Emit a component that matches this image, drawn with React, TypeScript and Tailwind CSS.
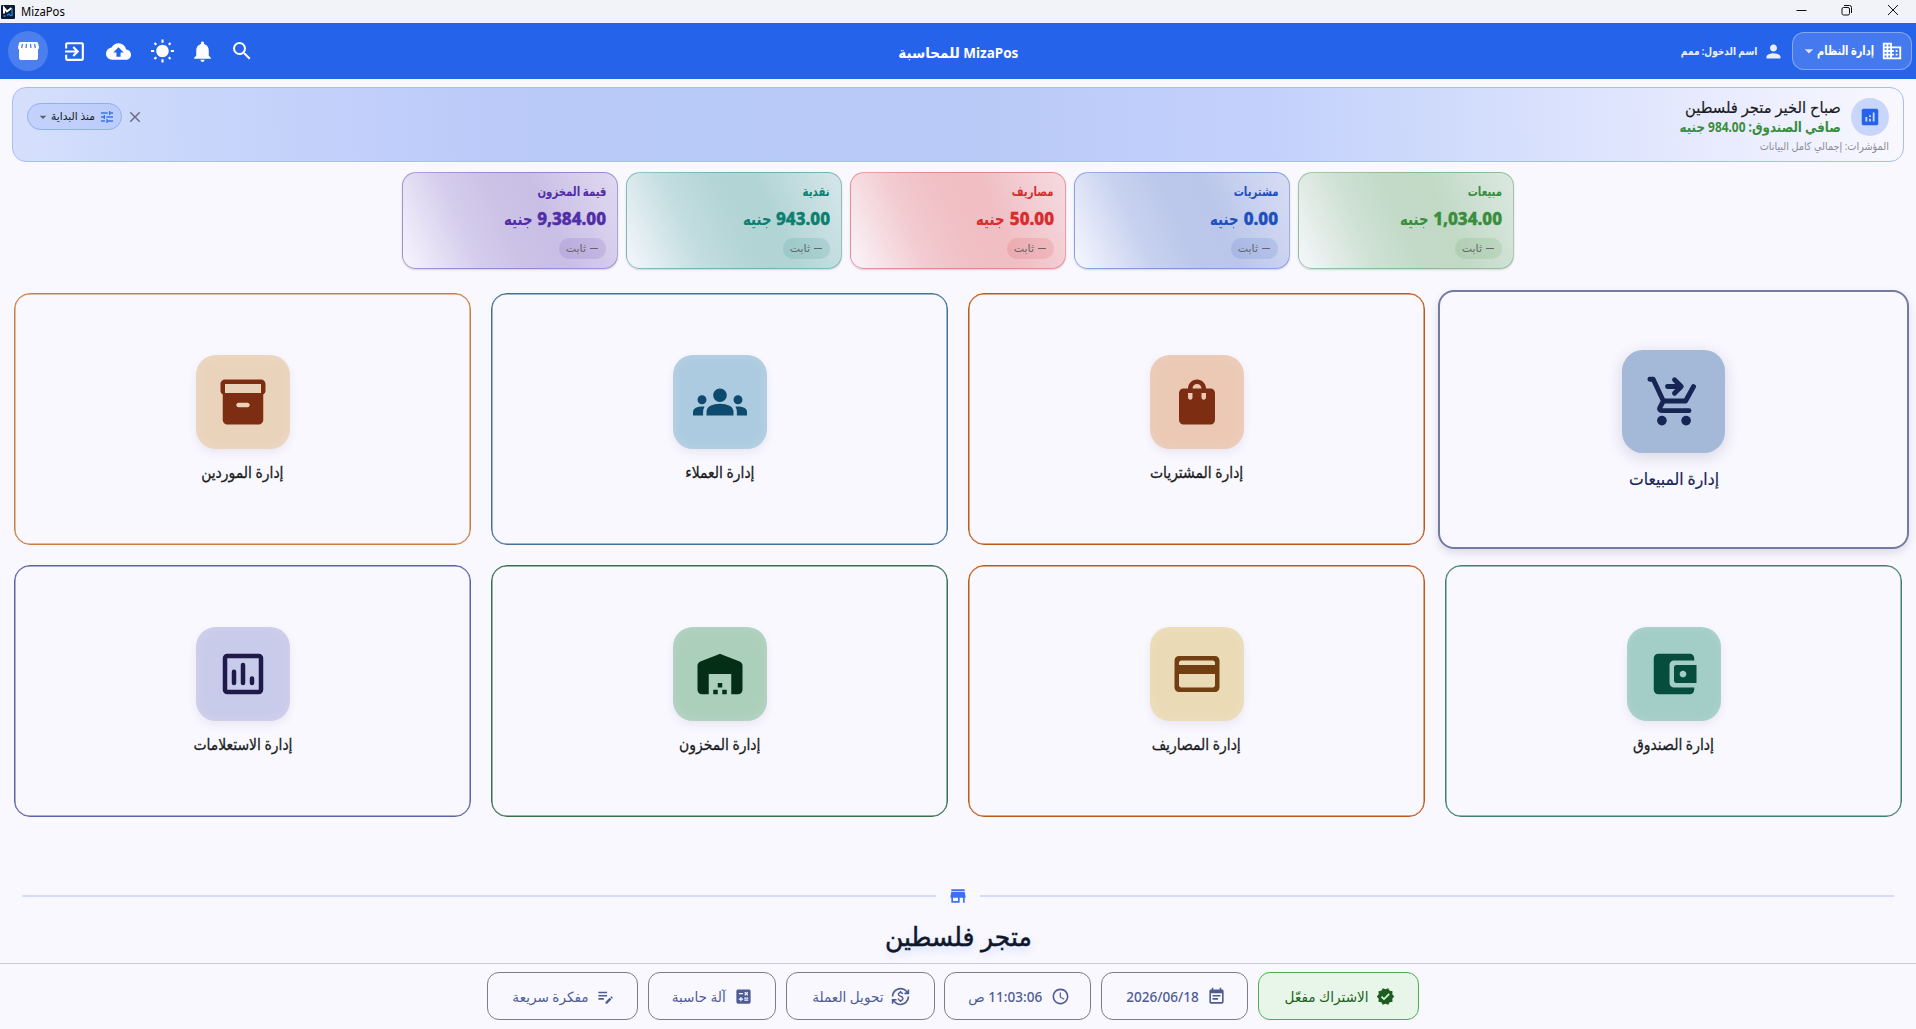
import type { ReactNode } from "react";
import {
  MdAccessTime,
  MdAnalytics,
  MdArrowDropDown,
  MdCalculate,
  MdClose,
  MdCloudUpload,
  MdCurrencyExchange,
  MdDomain,
  MdEditNote,
  MdEventNote,
  MdExitToApp,
  MdGroups,
  MdNotifications,
  MdPerson,
  MdSearch,
  MdStore,
  MdTune,
  MdVerified,
  MdWbSunny,
} from "react-icons/md";

type Stat = {
  label: string;
  value: string;
  card: string;
  text: string;
  chip: string;
};

type Tile = {
  label: string;
  border: string;
  box: string;
  icon: ReactNode;
  active?: boolean;
};

function Glyph({ d }: { d: string }) {
  return (
    <svg viewBox="0 0 24 24" className="size-[54px]" fill="currentColor" fillRule="evenodd">
      <path d={d} />
    </svg>
  );
}

const CartIcon = (
  <svg
    viewBox="0 0 24 24"
    className="size-[58px]"
    fill="none"
    stroke="currentColor"
    strokeWidth="2"
    strokeLinecap="round"
    strokeLinejoin="round"
  >
    <path d="M2 3h1.4l4.2 9h9.2l3.3-6M7.6 12l-1.5 2.8c-.3.6.1 1.2.8 1.2H18.2M9.3 6h5.5M12.2 3.2L15 6l-2.8 2.8" />
    <circle cx="7" cy="20.1" r="2" fill="currentColor" stroke="none" />
    <circle cx="17" cy="20.1" r="2" fill="currentColor" stroke="none" />
    <path d="M14 4.800L15.600 6 14 7.200z" fill="currentColor" stroke="none" />
  </svg>
);

const ReportIcon = (
  <svg
    viewBox="0 0 24 24"
    className="size-[54px]"
    fill="none"
    stroke="currentColor"
    strokeWidth="2"
    strokeLinecap="round"
  >
    <rect x="4" y="4" width="16" height="16" rx="1" />
    <path d="M8 11v5M12 8v8M16 14v2" />
  </svg>
);

const STATS: Stat[] = [
  {
    label: "مبيعات",
    value: "1,034.00",
    card: "border-[#388e3c]/40 bg-[linear-gradient(66deg,#f6f7fb_0%,#cfe1d4_30%,#c3dac8_48%,#c1d9c5_65%,#dce8e1_100%)]",
    text: "text-[#388e3c]",
    chip: "bg-[#388e3c]/12",
  },
  {
    label: "مشتريات",
    value: "0.00",
    card: "border-[#1e4fc0]/40 bg-[linear-gradient(66deg,#f6f7ff_0%,#c8d2ef_30%,#bcc8eb_48%,#bac7ea_65%,#d9ddf4_100%)]",
    text: "text-[#1e4fc0]",
    chip: "bg-[#1e4fc0]/12",
  },
  {
    label: "مصاريف",
    value: "50.00",
    card: "border-[#d92c2c]/40 bg-[linear-gradient(66deg,#faf5fb_0%,#f2cbd0_30%,#f0c0c5_48%,#f0bec3_65%,#f5dbe1_100%)]",
    text: "text-[#d92c2c]",
    chip: "bg-[#d92c2c]/12",
  },
  {
    label: "نقدية",
    value: "943.00",
    card: "border-[#0b7f70]/40 bg-[linear-gradient(66deg,#f5f7fd_0%,#c3dde0_30%,#b5d5d7_48%,#b1d4d5_65%,#d6e6ea_100%)]",
    text: "text-[#0b7f70]",
    chip: "bg-[#0b7f70]/12",
  },
  {
    label: "قيمة المخزون",
    value: "9,384.00",
    card: "border-[#512da8]/40 bg-[linear-gradient(66deg,#f7f5fe_0%,#d5cdec_30%,#cbc2e6_48%,#c9bfe5_65%,#e0d9f1_100%)]",
    text: "text-[#512da8]",
    chip: "bg-[#512da8]/12",
  },
];

const TILES: Tile[] = [
  {
    label: "إدارة المبيعات",
    border: "border-[#737b9f]",
    box: "bg-[#a4b9d7] text-[#172554]",
    icon: CartIcon,
    active: true,
  },
  {
    label: "إدارة المشتريات",
    border: "text-[#bd5a15]",
    box: "bg-[#ebc9b5] text-[#7c2d12]",
    icon: (
      <Glyph d="M18 6h-2c0-2.21-1.79-4-4-4S8 3.79 8 6H6c-1.1 0-2 .9-2 2v12c0 1.1.9 2 2 2h12c1.1 0 2-.9 2-2V8c0-1.1-.9-2-2-2zm-8 4c0 .55-.45 1-1 1s-1-.45-1-1V8h2v2zm2-6c1.1 0 2 .9 2 2h-4c0-1.1.9-2 2-2zm4 6c0 .55-.45 1-1 1s-1-.45-1-1V8h2v2z" />
    ),
  },
  {
    label: "إدارة العملاء",
    border: "text-[#437197]",
    box: "bg-[#adcbe0] text-[#0c4a6e]",
    icon: <MdGroups className="size-[54px]" />,
  },
  {
    label: "إدارة الموردين",
    border: "text-[#c97f41]",
    box: "bg-[#ead3bb] text-[#7c2d12]",
    icon: (
      <Glyph d="M20 2H4c-1 0-2 .9-2 2v3.01c0 .72.43 1.34 1 1.69V20c0 1.1 1.1 2 2 2h14c.9 0 2-.9 2-2V8.7c.57-.35 1-.97 1-1.69V4c0-1.1-1-2-2-2zm-6 12.3h-4c-.55 0-1-.45-1-1s.45-1 1-1h4c.55 0 1 .45 1 1s-.45 1-1 1zm6-6.3H4V4h16v4z" />
    ),
  },
  {
    label: "إدارة الصندوق",
    border: "text-[#3f7f6b]",
    box: "bg-[#a3cdc7] text-[#064e3b]",
    icon: (
      <Glyph d="M10 16V8c0-1.1.89-2 2-2h9V5c0-1.1-.9-2-2-2H5c-1.11 0-2 .9-2 2v14c0 1.1.89 2 2 2h14c1.1 0 2-.9 2-2v-1h-9c-1.11 0-2-.9-2-2zm3-8c-.55 0-1 .45-1 1v6c0 .55.45 1 1 1h9V8h-9zm3 5.5c-.83 0-1.5-.67-1.5-1.5s.67-1.5 1.5-1.5 1.5.67 1.5 1.5-.67 1.5-1.5 1.5z" />
    ),
  },
  {
    label: "إدارة المصاريف",
    border: "text-[#bd5a15]",
    box: "bg-[#eadbb6] text-[#713f12]",
    icon: (
      <Glyph d="M20 4H4c-1.11 0-1.99.89-1.99 2L2 18c0 1.11.89 2 2 2h16c1.11 0 2-.89 2-2V6c0-1.11-.89-2-2-2zm-1 14H5c-.55 0-1-.45-1-1v-5h16v5c0 .55-.45 1-1 1zm1-10H4V7c0-.55.45-1 1-1h14c.55 0 1 .45 1 1v1z" />
    ),
  },
  {
    label: "إدارة المخزون",
    border: "text-[#38704a]",
    box: "bg-[#accfbb] text-[#052e16]",
    icon: (
      <Glyph d="M22 19V8.35c0-.82-.5-1.55-1.26-1.86l-8-3.2c-.48-.19-1.01-.19-1.49 0l-8 3.2C2.5 6.8 2 7.54 2 8.35V19c0 1.1.9 2 2 2h3v-9h10v9h3c1.1 0 2-.9 2-2zm-11 0H9v2h2v-2zm2-3h-2v2h2v-2zm2 3h-2v2h2v-2z" />
    ),
  },
  {
    label: "إدارة الاستعلامات",
    border: "text-[#5b62a8]",
    box: "bg-[#c9cbea] text-[#1e1b4b]",
    icon: ReportIcon,
  },
];

const TOOLS = [
  { label: "الاشتراك مفعّل", icon: MdVerified, width: "w-[161px]", tone: "border-[#4caf50] bg-[#e8f5e9] text-[#1b5e20]" },
  { label: "2026/06/18", icon: MdEventNote, width: "w-[147px]", tone: "border-[#7b7c86] text-[#4e5c94]" },
  { label: "11:03:06 ص", icon: MdAccessTime, width: "w-[147px]", tone: "border-[#7b7c86] text-[#4e5c94]" },
  { label: "تحويل العملة", icon: MdCurrencyExchange, width: "w-[149px]", tone: "border-[#7b7c86] text-[#4e5c94]" },
  { label: "آلة حاسبة", icon: MdCalculate, width: "w-[128px]", tone: "border-[#7b7c86] text-[#4e5c94]" },
  { label: "مفكرة سريعة", icon: MdEditNote, width: "w-[151px]", tone: "border-[#7b7c86] text-[#4e5c94]" },
];

function TitleBar() {
  return (
    <div dir="ltr" className="flex h-[23px] items-center bg-[#f2f3f8] pl-px text-black">
      <svg viewBox="0 0 14 14" className="size-[14px]">
        <rect width="14" height="14" rx="1" fill="#0a1a33" />
        <path d="M3 8.500V3l3 3.500L10.500 3" fill="none" stroke="#fff" strokeWidth="2" />
        <path d="M11 3.500V11M2.500 11h2M6 10.500l2-1.500 2 2" fill="none" stroke="#1d8df2" strokeWidth="1.300" />
      </svg>
      <span className="ml-1.5 origin-left scale-x-94 text-xs leading-none">MizaPos</span>
      <svg viewBox="0 0 110 12" className="mr-[15px] mb-[3px] ml-auto h-3 w-[110px]" fill="none" stroke="#111" strokeWidth="1">
        <path d="M5.500 6.500h10" />
        <rect x="51" y="3.500" width="7.500" height="7.500" rx="1.500" />
        <path d="M53 1.500h5.500a2 2 0 0 1 2 2V9" />
        <path d="M97 1l10 10M107 1L97 11" />
      </svg>
    </div>
  );
}

function Header() {
  return (
    <header className="grid h-14 grid-cols-3 items-center bg-[#2563eb] pr-1 pl-2 text-white">
      <div className="flex items-center gap-2">
        <div className="flex h-[38px] w-[120px] items-center rounded-xl border border-white/35 bg-white/15 pr-2">
          <MdDomain className="size-[22px] shrink-0" />
          <span className="mr-[7px] w-[54px] origin-right scale-x-78 text-[12.5px] font-bold whitespace-nowrap">
            إدارة النظام
          </span>
          <MdArrowDropDown className="mr-px size-5 shrink-0 text-white/80" />
        </div>
        <div className="flex items-center gap-1.5 text-white/90">
          <MdPerson className="size-[21px]" />
          <span className="origin-right scale-x-82 text-[11px] font-semibold whitespace-nowrap">اسم الدخول: ممم</span>
        </div>
      </div>
      <h1 className="mt-0.5 mr-1 scale-x-90 text-center text-[15px] font-bold">MizaPos للمحاسبة</h1>
      <div dir="ltr" className="flex items-center">
        <div className="flex size-10 items-center justify-center rounded-full bg-white/18">
          <svg viewBox="0 0 21 18" className="h-[18px] w-[21px]">
            <path d="M2.500 0h16q1.200 0 1.500 1.200L21 5q0 2-1 2.500V16q0 2-2 2H3q-2 0-2-2V7.500Q0 7 0 5l1-3.800Q1.300 0 2.500 0Z" fill="#fff" />
            <path d="M4.500 2L3.700 6M8.500 2l-.4 4M12.500 2l.4 4M16.500 2l.8 4" stroke="#4a7eee" strokeWidth="1.300" />
          </svg>
        </div>
        <MdExitToApp className="ml-[14px] size-[25px]" />
        <MdCloudUpload className="ml-[19px] size-[25px]" />
        <MdWbSunny className="ml-[19px] size-[25px]" />
        <MdNotifications className="ml-[15px] size-[25px]" />
        <MdSearch className="ml-[15px] size-[24px]" />
      </div>
    </header>
  );
}

function Greeting() {
  return (
    <section className="mx-3 mt-2 flex h-[75px] items-start justify-between rounded-[14px] border border-[#a5bef6] bg-[linear-gradient(88deg,#d6e0fc_0%,#c9d6fb_9%,#bccbf9_24%,#b8caf8_35%,#b9caf8_50%,#c3d0fb_66%,#d0dbfb_76%,#e1e6fe_86%,#f9f8ff_100%)] px-[14px]">
      <div className="flex flex-col">
        <div className="mt-[9px] flex h-[39px] items-center gap-[10px]">
          <div className="flex size-[38px] items-center justify-center rounded-full bg-[#c8d6fb] text-[#2563eb]">
            <MdAnalytics className="size-[22px]" />
          </div>
          <div className="flex flex-col leading-none">
            <span className="origin-right scale-x-92 text-[16px] leading-5 text-[#1b1b21] [-webkit-text-stroke:0.2px]">
              صباح الخير متجر فلسطين
            </span>
            <span className="origin-right scale-x-85 text-[14px] leading-5 font-bold text-[#388e3c]">
              صافي الصندوق: 984.00 جنيه
            </span>
          </div>
        </div>
        <span className="mt-0.5 origin-right scale-x-88 text-[11px] leading-4 text-[#8b8c98]">
          المؤشرات: إجمالي كامل البيانات
        </span>
      </div>
      <div className="mt-[15px] flex items-center gap-1">
        <MdClose className="size-[18px] text-[#6b7080]" />
        <div className="flex h-[27px] w-[95px] items-center rounded-full border border-[#8eaef5] bg-[#2563eb]/10 pr-1.5">
          <MdTune className="size-4 shrink-0 text-[#3b71ee]" />
          <span className="mr-1 w-[44px] origin-right scale-x-97 text-[11px] whitespace-nowrap text-[#1b1b21]">منذ البداية</span>
          <MdArrowDropDown className="size-4 shrink-0 text-[#5b6070]" />
        </div>
      </div>
    </section>
  );
}

function StatCard({ stat }: { stat: Stat }) {
  return (
    <div className={`flex h-[97px] w-[216px] flex-col items-start rounded-[14px] border px-[11px] shadow-[0_1px_2px_rgba(0,0,0,0.15)] ${stat.card}`}>
      <span className={`mt-2 origin-right scale-x-78 text-[13px] leading-5 font-semibold ${stat.text}`}>{stat.label}</span>
      <span className={`mt-1.5 flex gap-[5px] text-[17px] leading-6 font-extrabold ${stat.text}`}>
        <span className="[-webkit-text-stroke:0.4px]">{stat.value}</span>
        <span className="origin-right scale-x-78 font-bold">جنيه</span>
      </span>
      <span className={`mt-[7px] flex h-[21px] w-[47px] items-center gap-1 rounded-[10px] pr-2 text-[11px] text-[#666] ${stat.chip}`}>
        <span className="h-px w-2 bg-[#666]" />
        ثابت
      </span>
    </div>
  );
}

function TileCard({ tile }: { tile: Tile }) {
  if (tile.active) {
    return (
      <div className={`-mx-[7px] -mt-[3.5px] -mb-1 flex flex-col items-center rounded-2xl border-2 pt-[58px] shadow-[0_4px_8px_rgba(30,30,80,0.13)] ${tile.border}`}>
        <div className={`flex size-[103px] items-center justify-center rounded-[21px] shadow-[0_4px_16px_rgba(30,30,80,0.16)] ${tile.box}`}>
          {tile.icon}
        </div>
        <span className="mt-3 scale-x-92 text-[17px] leading-7 text-[#172554] [-webkit-text-stroke:0.2px]">{tile.label}</span>
      </div>
    );
  }
  return (
    <div className={`flex flex-col items-center rounded-2xl border border-current pt-[61px] shadow-[inset_0_0_0_0.5px_currentColor] ${tile.border}`}>
      <div className={`flex size-[94px] items-center justify-center rounded-[20px] shadow-[0_4px_10px_rgba(60,30,80,0.08),inset_0_0_12px_rgba(255,255,255,0.15)] ${tile.box}`}>
        {tile.icon}
      </div>
      <span className="mt-[9px] scale-x-87 text-[16px] leading-7 text-[#1b1b21] [-webkit-text-stroke:0.3px]">{tile.label}</span>
    </div>
  );
}

function StoreName() {
  return (
    <section className="mt-[67px] flex flex-col items-center px-[22px]">
      <div className="flex h-6 w-full items-center gap-3">
        <div className="h-0.5 flex-1 bg-[#d3defc]" />
        <MdStore className="size-5 text-[#3b71ee]" />
        <div className="h-0.5 flex-1 bg-[#d3defc]" />
      </div>
      <h2 className="mt-[7px] scale-x-96 text-[26px] leading-[42px] font-medium text-[#0f172a] [-webkit-text-stroke:0.5px] [text-shadow:0_4px_10px_rgba(37,99,235,0.2)]">
        متجر فلسطين
      </h2>
    </section>
  );
}

function Toolbar() {
  return (
    <footer className="mt-auto flex h-[66px] justify-center gap-[9.8px] border-t border-[#c9cad2] pt-2 pr-[10px]">
      {TOOLS.map((tool) => (
        <button
          key={tool.label}
          type="button"
          className={`flex h-12 items-center justify-center gap-2 rounded-xl border text-[14px] font-medium whitespace-nowrap ${tool.width} ${tool.tone}`}
        >
          <tool.icon className="size-[19px]" />
          <span className="origin-right scale-x-97">{tool.label}</span>
        </button>
      ))}
    </footer>
  );
}

export default function App() {
  return (
    <div
      dir="rtl"
      className="flex h-screen flex-col overflow-hidden bg-[#f9f8ff] font-['Noto_Sans','DejaVu_Sans',sans-serif]"
    >
      <TitleBar />
      <Header />
      <Greeting />
      <section className="mt-2.5 flex justify-center gap-2">
        {STATS.map((stat) => (
          <StatCard key={stat.label} stat={stat} />
        ))}
      </section>
      <main className="mx-[14px] mt-6 grid grid-cols-4 grid-rows-[252px_252px] gap-5">
        {TILES.map((tile) => (
          <TileCard key={tile.label} tile={tile} />
        ))}
      </main>
      <StoreName />
      <Toolbar />
    </div>
  );
}
